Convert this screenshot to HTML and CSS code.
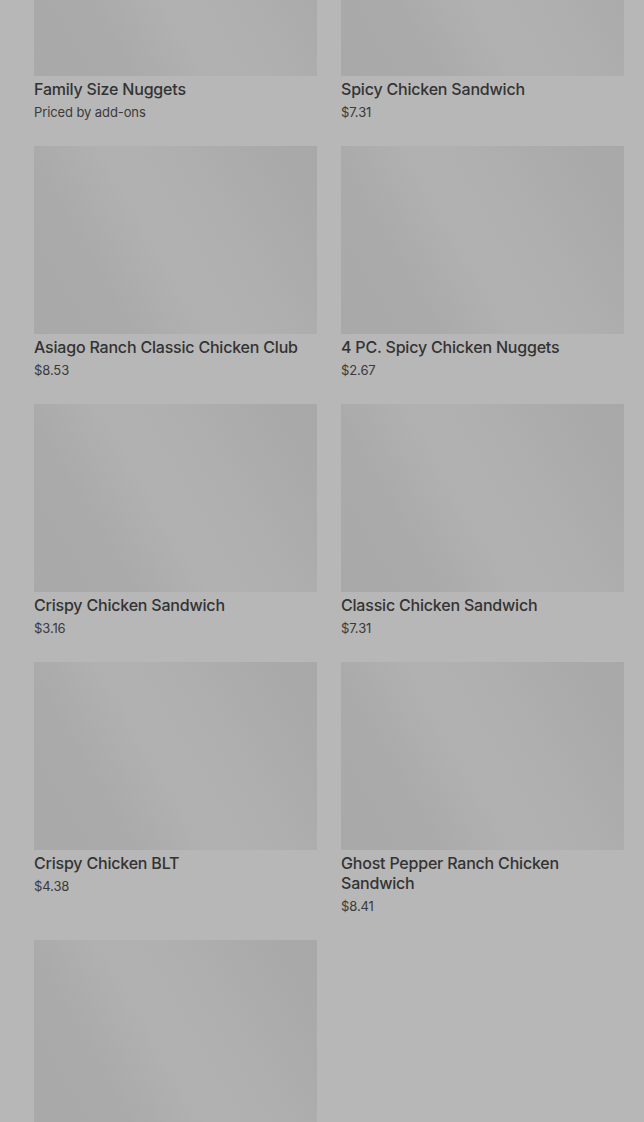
FILE: index.html
```html
<!DOCTYPE html>
<html lang="en">
<head>
    <meta charset="UTF-8">
    <meta name="viewport" content="width=device-width, initial-scale=1.0">
    <title>Menu</title>
    <link rel="stylesheet" href="styles.css">
</head>
<body>
    <div class="menu">
        <div class="item">
            <div class="thumb"></div>
            <div class="info">
                <h3>Family Size Nuggets</h3>
                <p>Priced by add-ons</p>
            </div>
        </div>
        <div class="item">
            <div class="thumb"></div>
            <div class="info">
                <h3>Spicy Chicken Sandwich</h3>
                <p>$7.31</p>
            </div>
        </div>
        <div class="item">
            <div class="thumb"></div>
            <div class="info">
                <h3>Asiago Ranch Classic Chicken Club</h3>
                <p>$8.53</p>
            </div>
        </div>
        <div class="item">
            <div class="thumb"></div>
            <div class="info">
                <h3>4 PC. Spicy Chicken Nuggets</h3>
                <p>$2.67</p>
            </div>
        </div>
        <div class="item">
            <div class="thumb"></div>
            <div class="info">
                <h3>Crispy Chicken Sandwich</h3>
                <p>$3.16</p>
            </div>
        </div>
        <div class="item">
            <div class="thumb"></div>
            <div class="info">
                <h3>Classic Chicken Sandwich</h3>
                <p>$7.31</p>
            </div>
        </div>
        <div class="item">
            <div class="thumb"></div>
            <div class="info">
                <h3>Crispy Chicken BLT</h3>
                <p>$4.38</p>
            </div>
        </div>
        <div class="item">
            <div class="thumb"></div>
            <div class="info">
                <h3>Ghost Pepper Ranch Chicken Sandwich</h3>
                <p>$8.41</p>
            </div>
        </div>
        <div class="item">
            <div class="thumb"></div>
            <div class="info">
                <h3></h3>
                <p></p>
            </div>
        </div>
    </div>
</body>
</html>
```

FILE: styles.css
```css
body {
    margin: 0;
    background-color: #b7b7b7;
    font-family: Inter, "Noto Sans", sans-serif;
    color: #333333;
    overflow: hidden;
}

.menu {
    display: grid;
    grid-template-columns: 283px 283px;
    column-gap: 24px;
    row-gap: 24px;
    padding-left: 34px;
    margin-top: -112px; /* list is scrolled */
}

.thumb {
    height: 188px;
    background: linear-gradient(60deg, #a9a9a9 0%, #aaaaaa 25%, #b1b1b1 45%, #b0b0b0 60%, #aaaaaa 85%, #a8a8a8 100%);
}

.info {
    padding-top: 3px;
}

.info h3 {
    margin: 0;
    font-size: 16px;
    font-weight: 500;
    line-height: 20px;
    letter-spacing: -0.2px;
}

.info p {
    margin: 3px 0 0;
    font-size: 13px;
    line-height: 20px;
    letter-spacing: -0.1px;
    color: #3a3a3a;
}
```
